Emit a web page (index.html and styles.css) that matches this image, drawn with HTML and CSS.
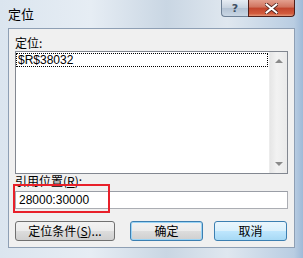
FILE: index.html
```html
<!DOCTYPE html>
<html lang="zh-CN">
<head>
    <meta charset="UTF-8">
    <title>定位</title>
    <link rel="stylesheet" href="styles.css">
</head>
<body>
    <div class="window">
        <div class="titlebar">
            <span class="title">定位</span>
            <div class="caption-buttons">
                <div class="cap-btn help">?</div>
                <div class="cap-btn close">
                    <svg width="13" height="11" viewBox="0 0 13 11">
                        <path d="M1.5 1.5 L11.5 9.5 M11.5 1.5 L1.5 9.5" stroke="#4a1f1a" stroke-width="3.6" stroke-linecap="square"/>
                        <path d="M1.5 1.5 L11.5 9.5 M11.5 1.5 L1.5 9.5" stroke="#ffffff" stroke-width="2" stroke-linecap="square"/>
                    </svg>
                </div>
            </div>
        </div>

        <div class="client">
            <div class="field-label">定位:</div>
            <div class="listbox">
                <div class="list-items">
                    <div class="list-item focused">$R$38032</div>
                </div>
                <div class="scrollbar">
                    <span class="arrow up"></span>
                    <span class="arrow down"></span>
                </div>
            </div>

            <div class="field-label">引用位置(<u>R</u>):</div>
            <div class="ref-row">
                <input class="ref-input" type="text" value="28000:30000">
                <div class="highlight"></div>
            </div>

            <div class="button-row">
                <button class="btn special">定位条件(<u>S</u>)...</button>
                <button class="btn ok">确定</button>
                <button class="btn cancel">取消</button>
            </div>
        </div>
    </div>
</body>
</html>
```

FILE: styles.css
```css
body {
    margin: 0;
    width: 303px;
    height: 258px;
    overflow: hidden;
    font-family: "Noto Sans CJK SC", "Liberation Sans", sans-serif;
    font-size: 12px;
    color: #000;
    background: linear-gradient(90deg, #dbe5ef 0%, #e6edf4 30%, #c9d6e3 55%, #dfe7ef 75%, #b9cde2 97%, #9fbad8 100%);
}

.window {
    display: flex;
    flex-direction: column;
    height: 258px;
    box-sizing: border-box;
    padding: 0 8px 10px 8px;
}

.titlebar {
    height: 28px;
    display: flex;
    align-items: flex-start;
}

.title {
    font-size: 13px;
    margin-top: 6px;
    line-height: 16px;
}

.caption-buttons {
    margin-left: auto;
    display: flex;
}

.cap-btn {
    height: 17px;
    box-sizing: border-box;
    display: flex;
    align-items: center;
    justify-content: center;
}

.help {
    width: 27px;
    border: 1px solid #6d7f94;
    border-top: none;
    border-right: none;
    border-radius: 0 0 0 4px;
    background: linear-gradient(#e6ecf3, #c7d2df 50%, #b3c2d3 51%, #c9d6e4);
    color: #3f4f63;
    font-family: "DejaVu Sans", sans-serif;
    font-weight: bold;
    font-size: 11px;
}

.close {
    width: 47px;
    border: 1px solid #4f1e19;
    border-top: none;
    border-radius: 0 0 4px 0;
    background: linear-gradient(#e3a08f, #d0735e 45%, #c1442c 50%, #d25b3d 85%, #e49a7c);
}

.client {
    flex: 1;
    background: #f0f0f0;
    border: 1px solid #8e9fb4;
    padding: 7px 6px 0 6px;
    display: flex;
    flex-direction: column;
}

.field-label {
    line-height: 14px;
    height: 14px;
}

.field-label u {
    text-decoration: underline;
}

.listbox {
    margin-top: 1px;
    height: 123px;
    box-sizing: border-box;
    border: 1px solid #828790;
    background: #fff;
    display: flex;
}

.list-items {
    flex: 1;
    padding: 1px 1px 0 0;
}

.list-item {
    height: 12px;
    line-height: 12px;
    padding-left: 1px;
    font-family: "Liberation Sans", "Noto Sans CJK SC", sans-serif;
    font-size: 12px;
    border: 1px dotted #000;
}

.scrollbar {
    width: 17px;
    background: linear-gradient(90deg, #e6e6e6, #f2f2f2 40%, #eaeaea);
    border-left: 1px solid #ececec;
    display: flex;
    flex-direction: column;
    justify-content: space-between;
    align-items: center;
    padding: 7px 0 7px 0;
}

.arrow {
    width: 0;
    height: 0;
    border-left: 4px solid transparent;
    border-right: 4px solid transparent;
}

.arrow.up {
    border-bottom: 4px solid #8a8a8a;
}

.arrow.down {
    border-top: 4px solid #8a8a8a;
}

.list-item + .list-item {
    border-color: transparent;
}

.ref-row {
    position: relative;
    margin-top: 3px;
}

.ref-input {
    display: block;
    width: 100%;
    height: 18px;
    box-sizing: border-box;
    border: 1px solid #abadb3;
    border-top-color: #9a9ea6;
    padding: 0 3px;
    font-family: "Liberation Sans", sans-serif;
    font-size: 12px;
    background: #fff;
    outline: none;
}

.highlight {
    position: absolute;
    left: -2px;
    top: -7px;
    width: 97px;
    height: 29px;
    box-sizing: border-box;
    border: 2px solid #e8202a;
}

.button-row {
    display: flex;
    margin-top: 12px;
}

.btn {
    height: 20px;
    box-sizing: border-box;
    border: 1px solid #707070;
    border-radius: 3px;
    background: linear-gradient(#f2f2f2, #ebebeb 50%, #dddddd 51%, #cfcfcf);
    font-family: "Noto Sans CJK SC", sans-serif;
    font-size: 12px;
    padding: 0;
    line-height: 16px;
    color: #000;
}

.special {
    width: 100px;
}

.ok {
    width: 73px;
    margin-left: 15px;
    border-color: #3c7fb1;
    box-shadow: inset 0 0 0 1px #9bd4f5;
}

.cancel {
    width: 73px;
    margin-left: 11px;
    border-color: #3c7fb1;
    background: linear-gradient(#eaf6fd, #d9f0fc 50%, #bee6fd 51%, #a7d9f5);
}
```
